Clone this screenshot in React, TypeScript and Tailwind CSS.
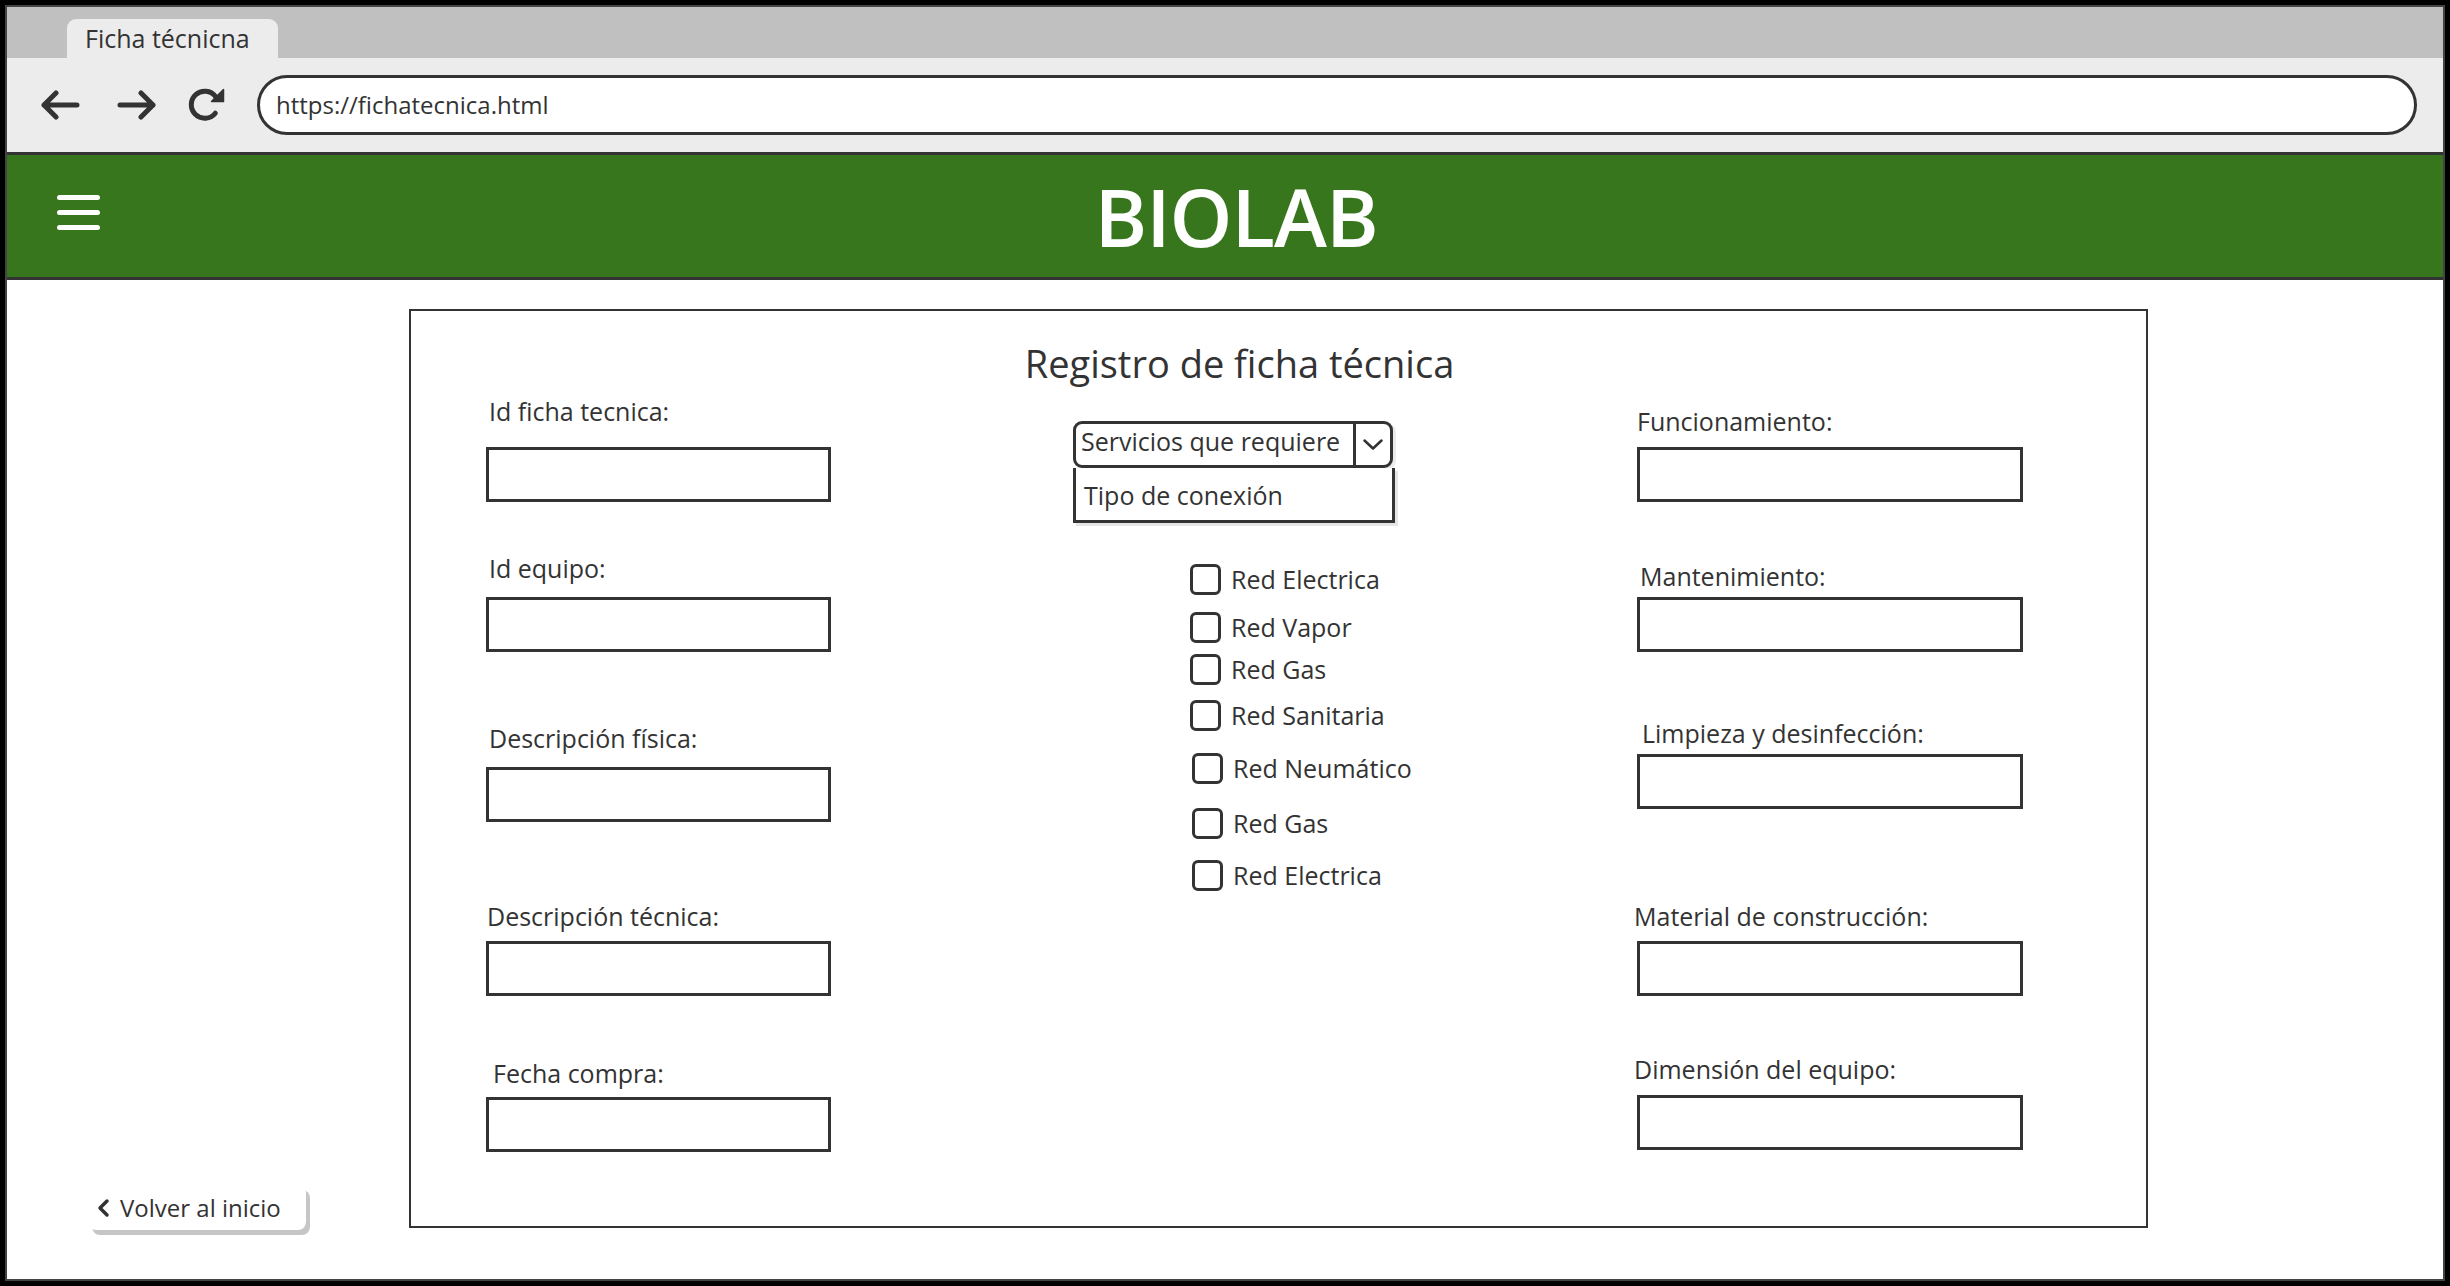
import React from "react";

const leftFields = [
  { label: "Id ficha tecnica:", lt: "mt-[11px]", it: "mt-[21px]", pl: "pl-[3px]" },
  { label: "Id equipo:", lt: "mt-[51px]", it: "mt-[14px]", pl: "pl-[3px]" },
  { label: "Descripción física:", lt: "mt-[71px]", it: "mt-[14px]", pl: "pl-[3px]" },
  { label: "Descripción técnica:", lt: "mt-[79px]", it: "mt-[10px]", pl: "pl-[1px]" },
  { label: "Fecha compra:", lt: "mt-[62px]", it: "mt-[9px]", pl: "pl-[7px]" },
];

const rightFields = [
  { label: "Funcionamiento:", lt: "mt-[21px]", it: "mt-[11px]", pl: "pl-[3px]" },
  { label: "Mantenimiento:", lt: "mt-[59px]", it: "mt-[6px]", pl: "pl-[6px]" },
  { label: "Limpieza y desinfección:", lt: "mt-[66px]", it: "mt-[6px]", pl: "pl-[8px]" },
  { label: "Material de construcción:", lt: "mt-[92px]", it: "mt-[10px]", pl: "pl-0" },
  { label: "Dimensión del equipo:", lt: "mt-[58px]", it: "mt-[11px]", pl: "pl-0" },
];

const services = [
  { label: "Red Electrica", mt: "mt-[41px]", pl: "pl-[117px]" },
  { label: "Red Vapor", mt: "mt-[17px]", pl: "pl-[117px]" },
  { label: "Red Gas", mt: "mt-[11px]", pl: "pl-[117px]" },
  { label: "Red Sanitaria", mt: "mt-[15px]", pl: "pl-[117px]" },
  { label: "Red Neumático", mt: "mt-[22px]", pl: "pl-[119px]" },
  { label: "Red Gas", mt: "mt-[24px]", pl: "pl-[119px]" },
  { label: "Red Electrica", mt: "mt-[21px]", pl: "pl-[119px]" },
];

type Field = { label: string; lt: string; it: string; pl: string };

function FieldList({ fields, inputClass }: { fields: Field[]; inputClass: string }) {
  return (
    <>
      {fields.map((f) => (
        <div key={f.label} className="flex flex-col">
          <div className={`${f.lt} ${f.pl} text-[25px] leading-[30px] whitespace-nowrap`}>{f.label}</div>
          <div className={`${f.it} ${inputClass} h-[55px] border-[3px] border-[#333] bg-white`} />
        </div>
      ))}
    </>
  );
}

function BrowserBar() {
  return (
    <div className="h-[97px] shrink-0 bg-[#ececec] border-b-[3px] border-[#333] flex items-center pl-[33px] pr-[26px]">
      {/* back */}
      <svg width="40" height="30" viewBox="0 0 40 30" fill="none" stroke="#333" strokeWidth="5" strokeLinecap="round" strokeLinejoin="round">
        <path d="M37 15H4M16 3 4 15l12 12" />
      </svg>
      {/* forward */}
      <svg className="ml-[37px]" width="40" height="30" viewBox="0 0 40 30" fill="none" stroke="#333" strokeWidth="5" strokeLinecap="round" strokeLinejoin="round">
        <path d="M3 15h33M24 3l12 12-12 12" />
      </svg>
      {/* reload */}
      <svg className="ml-[31px]" width="37" height="34" viewBox="0 0 37 34">
        <path d="M27.5 8.5A13.5 13.5 0 1 0 27.3 25.2" fill="none" stroke="#333" strokeWidth="5" strokeLinecap="round" />
        <path d="M35.5 1.5v12h-12z" fill="#333" stroke="#333" strokeWidth="1.5" strokeLinejoin="round" />
      </svg>
      <div className="ml-[32px] flex-1 h-[60px] rounded-full border-[3px] border-[#333] bg-white flex items-center pl-[16px] text-[24px]">
        https://fichatecnica.html
      </div>
    </div>
  );
}

export default function App() {
  return (
    <div className="w-[2450px] h-[1286px] bg-black p-[5px] text-[#333] font-medium" style={{ fontFamily: '"Open Sans", "Liberation Sans", sans-serif' }}>
      <div className="h-full border-2 border-[#444] bg-white flex flex-col overflow-hidden">
        {/* tab strip */}
        <div className="h-[51px] shrink-0 bg-[#c0c0c0] pl-[60px] flex items-end">
          <div className="w-[211px] h-[39px] bg-[#ececec] rounded-t-[9px] pl-[18px] flex items-center text-[25px]">
            Ficha técnicna
          </div>
        </div>

        <BrowserBar />

        {/* header */}
        <div className="h-[125px] shrink-0 bg-[#38761d] border-b-[3px] border-[#333] grid grid-cols-[1fr_auto_1fr] items-center">
          <div className="pl-[50px] pb-[8px]">
            <div className="flex flex-col gap-[10px] w-[43px]">
              <div className="h-[5px] rounded-full bg-white" />
              <div className="h-[5px] rounded-full bg-white" />
              <div className="h-[5px] rounded-full bg-white" />
            </div>
          </div>
          <div className="pl-[22px] text-white text-[80px] leading-none font-semibold tracking-[-1px]">BIOLAB</div>
          <div />
        </div>

        {/* content */}
        <div className="flex-1 flex">
          <div className="w-[402px] shrink-0 flex flex-col justify-end pl-[81px] pb-[49px]">
            <button className="w-[218px] h-[45px] rounded-[8px] bg-white shadow-[4px_5px_0_0_#c6c6c6] flex items-center pl-[8px] text-[24px] font-medium text-[#333]">
              <svg width="14" height="20" viewBox="0 0 14 20" fill="none" stroke="#333" strokeWidth="3.5" strokeLinecap="round" strokeLinejoin="round">
                <path d="M11 3 4 10l7 7" />
              </svg>
              <span className="ml-[10px]">Volver al inicio</span>
            </button>
          </div>

          <div className="mt-[29px] w-[1739px] h-[919px] border-2 border-[#333] flex flex-col">
            <div className="pt-[30px] pr-[78px] text-center text-[38px] leading-[44px]">Registro de ficha técnica</div>

            <div className="flex pl-[75px]">
              {/* left column */}
              <div className="w-[345px] flex flex-col">
                <FieldList fields={leftFields} inputClass="w-[345px]" />
              </div>

              {/* center column */}
              <div className="ml-[242px] w-[322px] flex flex-col">
                <div className="mt-[36px] w-[320px] h-[47px] rounded-[9px] border-[3px] border-[#333] bg-white flex shadow-[3px_2px_0_0_rgba(0,0,0,0.08)]">
                  <div className="flex-1 pl-[5px] pt-[2px] text-[25px] leading-[30px] whitespace-nowrap overflow-hidden">Servicios que requiere</div>
                  <div className="w-[37px] border-l-[3px] border-[#333] flex items-center justify-center">
                    <svg width="20" height="11" viewBox="0 0 20 11" fill="none" stroke="#333" strokeWidth="2.5" strokeLinecap="round" strokeLinejoin="round">
                      <path d="M1.5 1.5 10 9.5l8.5-8" />
                    </svg>
                  </div>
                </div>
                <div className="w-[322px] h-[55px] border-x-[3px] border-b-[3px] border-[#333] bg-white pl-[8px] pt-[12px] text-[25px] leading-[30px] shadow-[3px_3px_0_0_rgba(0,0,0,0.1)]">
                  Tipo de conexión
                </div>

                {services.map((s, i) => (
                  <div key={i} className={`${s.mt} ${s.pl} flex items-start`}>
                    <div className="w-[31px] h-[31px] shrink-0 rounded-[6px] border-[3px] border-[#333]" />
                    <span className="ml-[10px] text-[25px] leading-[30px] whitespace-nowrap">{s.label}</span>
                  </div>
                ))}
              </div>

              {/* right column */}
              <div className="ml-[239px] w-[389px] flex flex-col">
                <FieldList fields={rightFields} inputClass="ml-[3px] w-[386px]" />
              </div>
            </div>
          </div>
        </div>
      </div>
    </div>
  );
}
